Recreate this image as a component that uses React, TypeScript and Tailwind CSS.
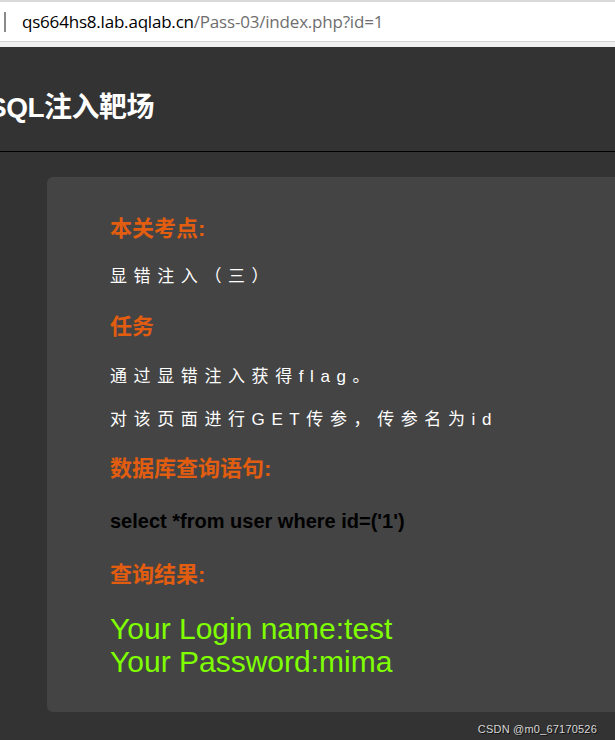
import React from "react";

const cjk = "font-['Liberation_Sans','Noto_Sans_CJK_SC',sans-serif]";

const Heading: React.FC<{ children: React.ReactNode; className?: string }> = ({
  children,
  className = "",
}) => (
  <h3
    className={`text-[22px] leading-[30px] font-bold text-[#e35d10] ${className}`}
  >
    {children}
  </h3>
);

const Line: React.FC<{ children: React.ReactNode; className?: string }> = ({
  children,
  className = "",
}) => (
  <p
    className={`text-[17px] leading-[24px] tracking-[6.6px] text-white ${className}`}
  >
    {children}
  </p>
);

export default function App() {
  return (
    <div className={`w-[615px] h-[740px] overflow-hidden bg-[#333333] ${cjk}`}>
      {/* browser address bar */}
      <div className="h-[41px] bg-white border-t-2 border-[#d9d9d9] flex items-center relative">
        <div className="absolute left-[4px] top-[10px] w-[2px] h-[20px] bg-[#8a8a8a]" />
        <span className="ml-[22px] text-[17px] font-['Open_Sans',sans-serif] tracking-[-0.2px]">
          <span className="text-black">qs664hs8.lab.aqlab.cn</span>
          <span className="text-[#6e6e6e]">/Pass-03/index.php?id=1</span>
        </span>
      </div>
      <div className="h-[6px] bg-[#f0f0f0] border-t border-[#d4d4d4]" />

      {/* page header */}
      <div className="h-[105px] border-b border-black flex items-center">
        <h1 className="-ml-[12px] mt-[18px] text-[28px] font-bold text-white tracking-[-0.5px]">
          SQL注入靶场
        </h1>
      </div>

      {/* content card */}
      <div className="ml-[47px] mt-[25px] w-[640px] rounded-[6px] bg-[#444444] pl-[63px] pt-[37px] pb-[34px]">
        <Heading>本关考点:</Heading>
        <Line className="mt-[21px]">显错注入（三）</Line>
        <Heading className="mt-[23px]">任务</Heading>
        <Line className="mt-[23px]">通过显错注入获得flag。</Line>
        <Line className="mt-[19px]">对该页面进行GET传参，传参名为id</Line>
        <Heading className="mt-[22px]">数据库查询语句:</Heading>
        <p className="mt-[25px] text-[20px] leading-[24px] font-bold text-black">
          select *from user where id=('1')
        </p>
        <Heading className="mt-[27px]">查询结果:</Heading>
        <div className="mt-[22px] text-[30px] leading-[33px] text-[#7fff00]">
          <div>Your Login name:test</div>
          <div>Your Password:mima</div>
        </div>
      </div>

      <div className="mt-[9px] pr-[18px] text-right text-[11px] tracking-[0.2px] text-[#d6d6d6] [text-shadow:1px_1px_0_#111]">
        CSDN @m0_67170526
      </div>
    </div>
  );
}
